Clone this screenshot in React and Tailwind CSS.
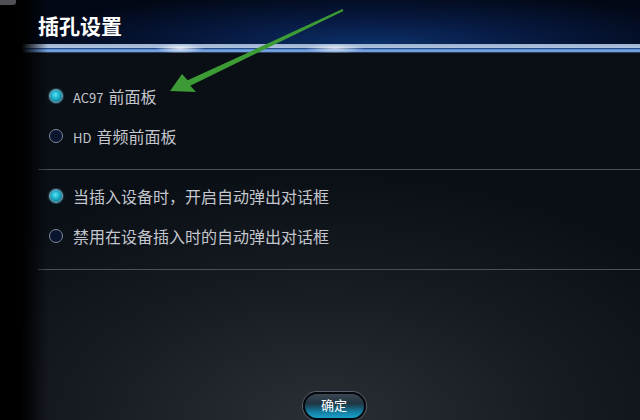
import React from "react";

const font = { fontFamily: '"Microsoft YaHei", "Noto Sans CJK SC", sans-serif' };

function Radio({ checked }) {
  return checked ? (
    <span className="w-[14px] h-[14px] rounded-full border border-[#8c9cab] bg-[radial-gradient(circle_at_45%_40%,#5fe3f2_0%,#1bb0cc_40%,#0a5f78_100%)] shadow-[0_0_2px_#3ac4df] shrink-0" />
  ) : (
    <span className="w-[14px] h-[14px] rounded-full border border-[#7d8898] bg-[#0b1530] shrink-0" />
  );
}

function Option({ checked, latin, text }) {
  return (
    <div className="h-[40px] flex items-center gap-[10px] pl-[49px]">
      <Radio checked={checked} />
      <span className="text-[16px] leading-none text-[#c3c7cd]">
        {latin && <span className="text-[13px] mr-[5px]">{latin}</span>}
        {text}
      </span>
    </div>
  );
}

export default function App() {
  return (
    <div
      className="w-[640px] h-[420px] relative overflow-hidden flex flex-col bg-[radial-gradient(ellipse_70%_60%_at_50%_100%,#2a2e35_0%,#161a21_55%,#0a0e15_100%)]"
      style={font}
    >
      {/* left shadow */}
      <div className="absolute inset-y-0 left-0 w-[48px] bg-[linear-gradient(to_right,#000_0%,#000_45%,rgba(0,0,0,0)_100%)] z-10 pointer-events-none" />
      <div className="absolute left-0 top-0 w-[16px] h-[5px] bg-[#4e5054] rounded-br-[3px] z-20" />

      {/* header */}
      <div className="h-[45px] pl-[38px] pt-[13px] bg-[radial-gradient(ellipse_55%_120%_at_58%_100%,#0c3069_0%,#071a42_45%,#020816_100%)]">
        <h1 className="relative z-20 text-[21px] leading-[24px] font-bold text-white">插孔设置</h1>
      </div>

      {/* band */}
      <div className="h-[9px] relative">
        <div className="absolute inset-0 bg-[linear-gradient(to_bottom,#9cb2d2_0%,#aec2de_40%,#2b4c85_50%,#5a8fdc_62%,#86b4f0_80%,#0c1628_100%)]" />
        <div className="absolute inset-0 bg-[radial-gradient(ellipse_25px_5px_at_180px_50%,rgba(255,255,255,0.8),rgba(255,255,255,0)),radial-gradient(ellipse_30px_5px_at_335px_50%,rgba(255,255,255,0.7),rgba(255,255,255,0))]" />
      </div>

      {/* options */}
      <div className="pt-[23px] pb-[13px]">
        <Option checked latin="AC97" text="前面板" />
        <Option latin="HD" text="音频前面板" />
      </div>
      <div className="ml-[38px] h-px bg-[#4a4f58]" />
      <div className="pt-[6px] pb-[13px]">
        <Option checked text="当插入设备时，开启自动弹出对话框" />
        <Option text="禁用在设备插入时的自动弹出对话框" />
      </div>
      <div className="ml-[38px] h-px bg-[#4a4f58]" />

      {/* footer */}
      <div className="flex justify-center pl-[28px] mt-[122px]">
        <button className="w-[63px] h-[28px] rounded-full border-2 border-[#05080c] shadow-[0_0_0_1px_#59636f] bg-[linear-gradient(to_bottom,#3c4652_0%,#1f3442_40%,#137fa3_75%,#1aa0c8_100%)] text-white text-[13px] leading-none pb-[4px]">
          确定
        </button>
      </div>

      {/* annotation arrow */}
      <svg className="absolute inset-0 z-30 pointer-events-none" width="640" height="420" viewBox="0 0 640 420">
        <polygon
          points="170,91 182,74 187.7,80.3 342.6,9.1 343.4,10.9 190.3,85.7 196,92"
          fill="#3d9b36"
        />
      </svg>
    </div>
  );
}
